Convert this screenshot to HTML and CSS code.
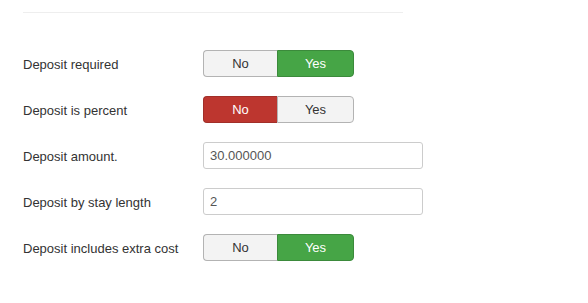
FILE: index.html
```html
<!DOCTYPE html>
<html>
<head>
<meta charset="utf-8">
<link rel="stylesheet" href="styles.css">
</head>
<body>
<div class="page">
  <hr class="sep">
  <div class="form">
    <div class="row">
      <div class="label">Deposit required</div>
      <div class="toggle">
        <span class="opt no">No</span>
        <span class="opt yes on-yes">Yes</span>
      </div>
    </div>
    <div class="row">
      <div class="label">Deposit is percent</div>
      <div class="toggle">
        <span class="opt no on-no">No</span>
        <span class="opt yes">Yes</span>
      </div>
    </div>
    <div class="row">
      <div class="label">Deposit amount.</div>
      <div class="input">30.000000</div>
    </div>
    <div class="row">
      <div class="label">Deposit by stay length</div>
      <div class="input">2</div>
    </div>
    <div class="row">
      <div class="label">Deposit includes extra cost</div>
      <div class="toggle">
        <span class="opt no">No</span>
        <span class="opt yes on-yes">Yes</span>
      </div>
    </div>
  </div>
</div>
</body>
</html>
```

FILE: styles.css
```css
html, body {
  margin: 0;
  padding: 0;
  background: #fff;
}
body {
  font-family: "Liberation Sans", Arial, sans-serif;
  font-size: 13px;
  line-height: 18px;
  color: #333;
}
.page {
  padding: 12px 0 0 23px;
}
.sep {
  width: 380px;
  margin: 0;
  border: 0;
  border-top: 1px solid #eeeeee;
  border-bottom: 1px solid #ffffff;
  height: 0;
}
.form {
  padding-top: 36px;
  display: flex;
  flex-direction: column;
  gap: 19px;
}
.row {
  display: flex;
  align-items: flex-start;
  height: 27px;
}
.label {
  width: 180px;
  padding-top: 6px;
  flex: none;
}
.toggle {
  display: flex;
  height: 27px;
  box-sizing: border-box;
}
.opt {
  display: flex;
  align-items: center;
  justify-content: center;
  box-sizing: border-box;
  height: 27px;
  background: #f3f3f3;
  border: 1px solid #b3b3b3;
  color: #333;
}
.opt.no {
  width: 74px;
  border-radius: 4px 0 0 4px;
  border-right: 0;
}
.opt.yes {
  width: 77px;
  border-radius: 0 4px 4px 0;
}
.opt.on-yes {
  background: #46a546;
  border-color: #3b8a3b;
  color: #fff;
}
.opt.on-no {
  background: #bd362f;
  border-color: #a12f29;
  color: #fff;
}
.input {
  box-sizing: border-box;
  width: 220px;
  height: 27px;
  padding: 4px 6px;
  border: 1px solid #cccccc;
  border-radius: 3px;
  color: #555;
  background: #fff;
}
```
